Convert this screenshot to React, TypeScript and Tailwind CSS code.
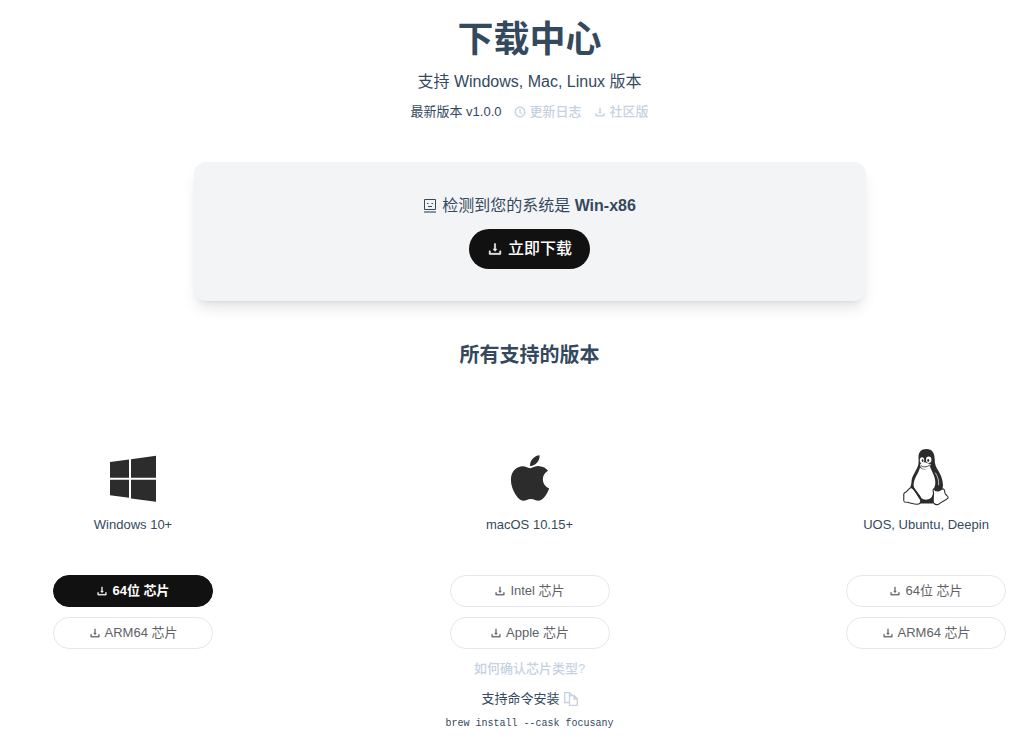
import React from 'react';
import { AiOutlineClockCircle, AiOutlineDownload } from 'react-icons/ai';
import { FaApple } from 'react-icons/fa';

interface Build {
  label: string;
  primary?: boolean;
}

interface PlatformProps {
  name: string;
  icon: React.ReactNode;
  builds: Build[];
  children?: React.ReactNode;
}

const WINDOWS_BUILDS: Build[] = [{ label: '64位 芯片', primary: true }, { label: 'ARM64 芯片' }];
const MAC_BUILDS: Build[] = [{ label: 'Intel 芯片' }, { label: 'Apple 芯片' }];
const LINUX_BUILDS: Build[] = [{ label: '64位 芯片' }, { label: 'ARM64 芯片' }];

function ComputerIcon() {
  return (
    <svg viewBox="0 0 14 16" className="w-3.5 h-4" fill="none" stroke="currentColor" aria-hidden="true">
      <path d="M1.5 1.5h11v10h-11z" />
      <path d="M4 5.500h1.500M8.500 5.500H10M5 8.500h4" />
      <path d="M1 14h12" strokeWidth="1.4" opacity="0.8" />
    </svg>
  );
}

function WindowsIcon() {
  return (
    <svg viewBox="0 0 56 56" className="w-14 h-14" fill="#2c2c2c" aria-hidden="true">
      <path d="M5 12l19-2.5v18.3H5zM26 9.2L51 5.8v22H26zM5 29.8h19v18L5 45.2zM26 29.8h25v22l-25-3.4z" />
    </svg>
  );
}

function TuxIcon() {
  return (
    <svg viewBox="1 2 60 62" className="w-[60px] h-[62px]" strokeLinejoin="round" strokeLinecap="round" aria-hidden="true">
      {/* body */}
      <path
        d="M31.5 4c-5.500 0-8.200 3.400-8 8.500.1 4.500.5 7-1.700 11C19.500 28.500 16.500 32 16.500 37c-.1 2-.9 4-1.300 6L25 58.500h13L47.500 43c1.200-6-1-12-4-17-2.500-4-3.800-6.500-3.800-11.500C39.700 8 37 4 31.500 4z"
        fill="#2c2c2c"
      />
      {/* belly */}
      <path
        d="M25 22.500c3 3 7 2.500 10-1 1.500 4.500 4.800 9 5.300 15 .2 3-.7 5.500-1.500 8-.9 4-1 7-3 8.500-3 2.300-7 2.300-9.500 0C24.500 49 17.500 44 18.700 38.500c.8-6 5-10.500 6.300-16z"
        fill="white"
      />
      {/* face */}
      <ellipse cx="27" cy="15.200" rx="2.200" ry="2.900" fill="white" />
      <ellipse cx="33.700" cy="14.800" rx="2.700" ry="3.200" fill="white" />
      <ellipse cx="27.600" cy="15.600" rx="0.900" ry="1.300" fill="#2c2c2c" />
      <ellipse cx="33.200" cy="15.400" rx="1" ry="1.400" fill="#2c2c2c" />
      <path d="M25 19.500c1.500-2 4.500-2.700 6-1.800l4.800 1.500c-.5 3-3 5-5.800 5-2.500 0-5-2-5-4.700z" fill="white" />
      <path d="M26 20.400c2 2.300 5.500 2 8.700-.3" fill="none" stroke="#2c2c2c" strokeWidth="0.9" />
      {/* wing highlight */}
      <path d="M40.500 28c2.500 4 3.500 8 3.200 12" fill="none" stroke="white" strokeWidth="0.7" />
      {/* feet */}
      <path
        d="M16.500 42.500c2.800 1 6 8 8.700 11.500 1.500 2.500.2 4.800-2.700 5.200-4 .3-8-2-13-2.200-1.500-.5-.5-3-.7-5.500-.3-2.500-.3-3.500 1.200-4 2.500-.7 3.500-4.500 6.500-5z"
        fill="white"
        stroke="#2c2c2c"
        strokeWidth="1.1"
      />
      <path
        d="M39 43.500c.7 2 3 2.800 5 2.200 2-.7 2.700-2.400 4.500-1.700 1.700.8.700 3.500 2 5.200 1.500 1.800 3.500 2.500 2.500 4-2 2.200-6.200 3.300-9 5.800-2 1.300-5.500.5-5.800-2.500-.3-4.500 1-8-.2-11.500z"
        fill="white"
        stroke="#2c2c2c"
        strokeWidth="1.1"
      />
      <path d="M39.500 42c.5 3.500 5 4.800 7.500 2.500L48 39z" fill="#2c2c2c" />
      <path d="M16.500 42c3 1 6 7 8.700 11" fill="none" stroke="#2c2c2c" strokeWidth="1.8" />
    </svg>
  );
}

function CopyIcon() {
  return (
    <svg viewBox="0 0 14 14" className="w-3.5 h-3.5" fill="none" stroke="currentColor" strokeWidth="1.3" aria-hidden="true">
      <path d="M5 10.500H.7V.7h5L8.500 3.500M5.500.7v3" />
      <path d="M5.500 3.700h4.800l3 3v6.600H5.500zM10 3.700v3.300h3.300" />
    </svg>
  );
}

function Platform({ name, icon, builds, children }: PlatformProps) {
  return (
    <section className="w-40 flex flex-col items-center text-[13px] leading-5 whitespace-nowrap">
      <div className="h-16 flex items-center justify-center">{icon}</div>
      <h3 className="mt-[5px]">{name}</h3>
      <div className="mt-10 w-full flex flex-col gap-2.5">
        {builds.map((build) => (
          <button
            key={build.label}
            type="button"
            className={`h-8 w-full rounded-full border flex items-center justify-center gap-1 ${
              build.primary
                ? 'bg-[#111111] border-[#111111] text-white font-bold'
                : 'bg-white border-gray-200 text-[#606266]'
            }`}
          >
            <AiOutlineDownload className="w-3 h-3 stroke-[30px]" />
            {build.label}
          </button>
        ))}
      </div>
      {children}
    </section>
  );
}

export default function App() {
  return (
    <main className="min-h-screen bg-white pl-[53px] pr-[25px] pt-5 pb-4 text-[#34495e] font-['Liberation_Sans','Noto_Sans_CJK_SC',sans-serif]">
      <header className="flex flex-col items-center">
        <h1 className="text-4xl font-bold">下载中心</h1>
        <p className="mt-2.5 text-base">支持 Windows, Mac, Linux 版本</p>
        <div className="mt-2 flex items-center gap-3 text-[13px] leading-5">
          <span>最新版本 v1.0.0</span>
          <a href="#changelog" className="flex items-center gap-1 text-[#c6d2df] font-medium">
            <AiOutlineClockCircle className="w-3 h-3 stroke-[40px]" />
            更新日志
          </a>
          <a href="#community" className="flex items-center gap-1 text-[#c6d2df] font-medium">
            <AiOutlineDownload className="w-3 h-3 stroke-[40px]" />
            社区版
          </a>
        </div>
      </header>

      {/* Detected system */}
      <section className="mt-10 mx-auto max-w-2xl rounded-xl bg-gray-100 shadow-lg py-8 flex flex-col items-center">
        <p className="flex items-center gap-[5px] text-base">
          <ComputerIcon />
          <span>
            检测到您的系统是 <strong>Win-x86</strong>
          </span>
        </p>
        <button
          type="button"
          className="mt-[11px] h-10 px-[18px] rounded-full bg-[#111111] text-white text-base font-medium flex items-center gap-[5px]"
        >
          <AiOutlineDownload className="w-4 h-4 stroke-[30px]" />
          立即下载
        </button>
      </section>

      <h2 className="mt-10 text-center text-xl font-bold">所有支持的版本</h2>

      {/* Platforms */}
      <div className="mt-[77px] flex justify-between items-start">
        <Platform name="Windows 10+" icon={<WindowsIcon />} builds={WINDOWS_BUILDS} />
        <Platform name="macOS 10.15+" icon={<FaApple className="w-13 h-13 text-[#2c2c2c]" />} builds={MAC_BUILDS}>
          <a href="#chip" className="mt-2.5 text-[#c6d2df] font-medium">
            如何确认芯片类型?
          </a>
          <div className="mt-2.5 flex items-center gap-1">
            支持命令安装
            <button type="button" aria-label="复制" className="text-[#c6d2df]">
              <CopyIcon />
            </button>
          </div>
          <code className="mt-[5px] font-['Liberation_Mono',monospace] text-[10px] leading-5">
            brew install --cask focusany
          </code>
        </Platform>
        <Platform name="UOS, Ubuntu, Deepin" icon={<TuxIcon />} builds={LINUX_BUILDS} />
      </div>
    </main>
  );
}
